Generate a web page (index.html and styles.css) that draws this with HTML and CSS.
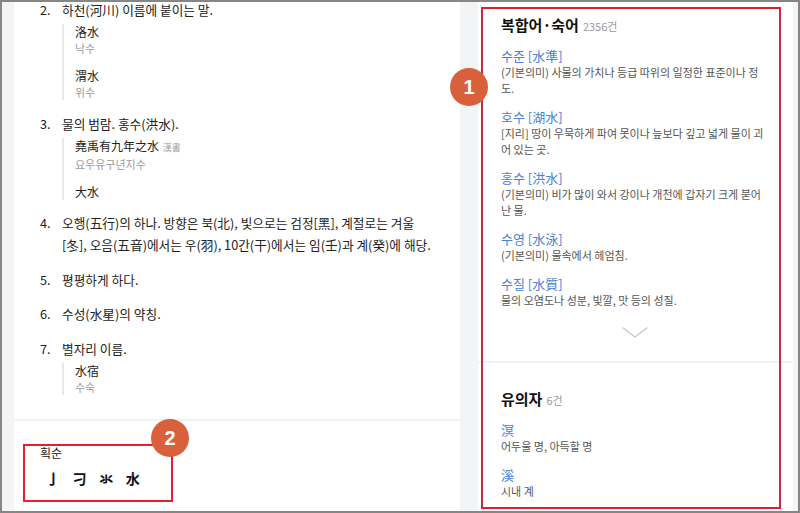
FILE: index.html
```html
<!DOCTYPE html>
<html>
<head>
<meta charset="utf-8">
<meta name="viewport" content="width=device-width, initial-scale=1">
<title>水 - 한자사전</title>
<link rel="stylesheet" href="styles.css">
</head>
<body>
<div class="frame">

  <div class="entry">
    <ol class="senses">
      <li class="sense">
        <div class="sense-line"><span class="num">2.</span><p>하천(河川) 이름에 붙이는 말.</p></div>
        <div class="examples">
          <div class="ex">
            <div class="ex-hanja">洛水</div>
            <div class="ex-read">낙수</div>
          </div>
          <div class="ex">
            <div class="ex-hanja">渭水</div>
            <div class="ex-read">위수</div>
          </div>
        </div>
      </li>
      <li class="sense">
        <div class="sense-line"><span class="num">3.</span><p>물의 범람. 홍수(洪水).</p></div>
        <div class="examples">
          <div class="ex">
            <div class="ex-hanja">堯禹有九年之水 <span class="src">漢書</span></div>
            <div class="ex-read">요우유구년지수</div>
          </div>
          <div class="ex">
            <div class="ex-hanja">大水</div>
          </div>
        </div>
      </li>
      <li class="sense">
        <div class="sense-line"><span class="num">4.</span><p>오행(五行)의 하나. 방향은 북(北), 빛으로는 검정[黑], 계절로는 겨울 [冬], 오음(五音)에서는 우(羽), 10간(干)에서는 임(壬)과 계(癸)에 해당.</p></div>
      </li>
      <li class="sense">
        <div class="sense-line"><span class="num">5.</span><p>평평하게 하다.</p></div>
      </li>
      <li class="sense">
        <div class="sense-line"><span class="num">6.</span><p>수성(水星)의 약칭.</p></div>
      </li>
      <li class="sense">
        <div class="sense-line"><span class="num">7.</span><p>별자리 이름.</p></div>
        <div class="examples">
          <div class="ex">
            <div class="ex-hanja">水宿</div>
            <div class="ex-read">수숙</div>
          </div>
        </div>
      </li>
    </ol>

    <div class="strokes-sec">
      <h3 class="strokes-title">획순</h3>
      <div class="strokes">
        <span>亅</span>
        <span>刁</span>
        <span>氺</span>
        <span>水</span>
      </div>
    </div>
  </div>

  <div class="side">
    <div class="words">
      <h2 class="sec-title">복합어·숙어<span class="count">2356건</span></h2>
      <div class="word">
        <a class="word-title" href="#">수준 [水準]</a>
        <p class="word-desc">(기본의미) 사물의 가치나 등급 따위의 일정한 표준이나 정도.</p>
      </div>
      <div class="word">
        <a class="word-title" href="#">호수 [湖水]</a>
        <p class="word-desc">[지리] 땅이 우묵하게 파여 못이나 늪보다 깊고 넓게 물이 괴어 있는 곳.</p>
      </div>
      <div class="word">
        <a class="word-title" href="#">홍수 [洪水]</a>
        <p class="word-desc">(기본의미) 비가 많이 와서 강이나 개천에 갑자기 크게 붇어난 물.</p>
      </div>
      <div class="word">
        <a class="word-title" href="#">수영 [水泳]</a>
        <p class="word-desc">(기본의미) 물속에서 헤엄침.</p>
      </div>
      <div class="word">
        <a class="word-title" href="#">수질 [水質]</a>
        <p class="word-desc">물의 오염도나 성분, 빛깔, 맛 등의 성질.</p>
      </div>
      <div class="more">
        <svg width="26" height="11" viewBox="0 0 26 11"><polyline points="0.5,0.5 13,10 25.5,0.5" fill="none" stroke="#c4c6ca" stroke-width="1.2"/></svg>
      </div>
    </div>

    <div class="similar">
      <h2 class="sec-title">유의자<span class="count">6건</span></h2>
      <div class="word">
        <a class="word-title" href="#">溟</a>
        <p class="word-desc">어두울 명, 아득할 명</p>
      </div>
      <div class="word">
        <a class="word-title" href="#">溪</a>
        <p class="word-desc">시내 계</p>
      </div>
    </div>
  </div>

  <!-- annotation marks -->
  <div class="mark mark-words"></div>
  <div class="mark mark-strokes"></div>
  <div class="badge badge-1">1</div>
  <div class="badge badge-2">2</div>
</div>
</body>
</html>
```

FILE: styles.css
```css
body {
  margin: 0;
  font-family: "Noto Sans CJK KR", "Noto Sans", sans-serif;
  color: #222;
}

.frame {
  position: relative;
  width: 800px;
  height: 513px;
  box-sizing: border-box;
  border: 2px solid #868686;
  background: #f3f4f6;
  display: flex;
  gap: 18px;
  padding: 0 5px 0 12px;
  overflow: hidden;
}

/* left column: meanings */
.entry {
  width: 446px;
  flex: none;
  background: #fff;
}

.senses {
  list-style: none;
  margin: -3px 0 0;
  padding: 0 29px 12px 26px;
  border-bottom: 2px solid #f1f2f4;
}

.sense {
  margin-bottom: 12.5px;
}

.sense-line {
  display: flex;
  font-size: 12.7px;
  line-height: 22px;
  color: #222;
}

.sense-line p {
  margin: 0;
}

.num {
  width: 22px;
  flex: none;
}

.examples {
  margin: 3px 0 0 22px;
  padding-left: 11px;
  border-left: 2px solid #e8e8e8;
}

.ex + .ex {
  margin-top: 12px;
}

.ex-hanja {
  font-size: 12px;
  line-height: 16px;
  color: #222;
}

.ex-read {
  font-size: 11px;
  line-height: 16px;
  color: #9a9a9a;
}

.src {
  font-size: 9px;
  color: #a0a0a0;
  margin-left: 1px;
}

.strokes-sec {
  padding: 23px 26px 0;
}

.strokes-title {
  margin: 0;
  font-size: 12px;
  line-height: 18px;
  font-weight: 400;
  color: #222;
}

.strokes {
  display: flex;
  margin-top: 6px;
  font-size: 14px;
  line-height: 20px;
  font-weight: 700;
  color: #111;
}

.strokes span {
  width: 26.5px;
  text-align: center;
}

/* right column: related words */
.side {
  width: 315px;
  flex: none;
  background: #fff;
}

.words {
  padding: 12px 24px 24px 23px;
  border-bottom: 2px solid #f1f2f4;
}

.similar {
  padding: 25px 24px 0 23px;
}

.sec-title {
  margin: 0 0 10px;
  font-size: 15px;
  line-height: 22px;
  font-weight: 700;
  color: #111;
}

.count {
  font-size: 11px;
  font-weight: 400;
  color: #9a9a9a;
  margin-left: 4px;
}

.word {
  margin-bottom: 12px;
}

.word-title {
  display: block;
  font-size: 13px;
  line-height: 17px;
  color: #4a80d6;
  text-decoration: none;
}

.word-desc {
  margin: 0;
  font-size: 11px;
  line-height: 16px;
  color: #555;
}

.more {
  display: flex;
  justify-content: center;
  margin-top: 19px;
  height: 10px;
}

/* annotation marks drawn over the page */
.mark {
  position: absolute;
  box-sizing: border-box;
  border: 2px solid #e5202a;
}

.mark-words {
  left: 479px;
  top: 5px;
  width: 300px;
  height: 502px;
  border-color: #e31e28 #c42d3a;
}

.mark-strokes {
  left: 21px;
  top: 442px;
  width: 150px;
  height: 58px;
}

.badge {
  position: absolute;
  width: 38px;
  height: 38px;
  border-radius: 50%;
  background: #d8603b;
  color: #fff;
  font: bold 20px/38px "Liberation Sans", Arial, sans-serif;
  text-align: center;
}

.badge-1 {
  left: 448px;
  top: 66px;
}

.badge-2 {
  left: 149px;
  top: 417px;
}
```
